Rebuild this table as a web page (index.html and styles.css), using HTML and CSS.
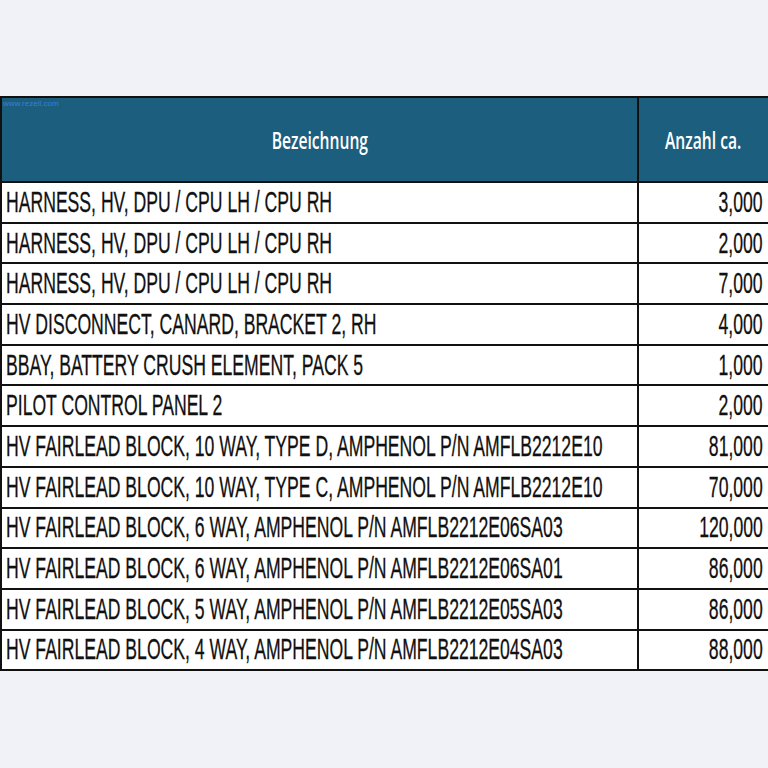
FILE: index.html
```html
<!DOCTYPE html>
<html lang="de">
<head>
<meta charset="utf-8">
<title>Bezeichnung</title>
<link rel="stylesheet" href="styles.css">
</head>
<body>
<div class="page">
  <table class="parts">
    <thead>
      <tr>
        <th class="col-name"><span class="mark">www.rezeil.com</span><span class="hd">Bezeichnung</span></th>
        <th class="col-qty"><span class="hd">Anzahl ca.</span></th>
      </tr>
    </thead>
    <tbody>
      <tr><td class="name"><span class="t">HARNESS, HV, DPU / CPU LH / CPU RH</span></td><td class="qty"><span class="t">3,000</span></td></tr>
      <tr><td class="name"><span class="t">HARNESS, HV, DPU / CPU LH / CPU RH</span></td><td class="qty"><span class="t">2,000</span></td></tr>
      <tr><td class="name"><span class="t">HARNESS, HV, DPU / CPU LH / CPU RH</span></td><td class="qty"><span class="t">7,000</span></td></tr>
      <tr><td class="name"><span class="t">HV DISCONNECT, CANARD, BRACKET 2, RH</span></td><td class="qty"><span class="t">4,000</span></td></tr>
      <tr><td class="name"><span class="t">BBAY, BATTERY CRUSH ELEMENT, PACK 5</span></td><td class="qty"><span class="t">1,000</span></td></tr>
      <tr><td class="name"><span class="t">PILOT CONTROL PANEL 2</span></td><td class="qty"><span class="t">2,000</span></td></tr>
      <tr><td class="name"><span class="t">HV FAIRLEAD BLOCK, 10 WAY, TYPE D, AMPHENOL P/N AMFLB2212E10</span></td><td class="qty"><span class="t">81,000</span></td></tr>
      <tr><td class="name"><span class="t">HV FAIRLEAD BLOCK, 10 WAY, TYPE C, AMPHENOL P/N AMFLB2212E10</span></td><td class="qty"><span class="t">70,000</span></td></tr>
      <tr><td class="name"><span class="t">HV FAIRLEAD BLOCK, 6 WAY, AMPHENOL P/N AMFLB2212E06SA03</span></td><td class="qty"><span class="t">120,000</span></td></tr>
      <tr><td class="name"><span class="t">HV FAIRLEAD BLOCK, 6 WAY, AMPHENOL P/N AMFLB2212E06SA01</span></td><td class="qty"><span class="t">86,000</span></td></tr>
      <tr><td class="name"><span class="t">HV FAIRLEAD BLOCK, 5 WAY, AMPHENOL P/N AMFLB2212E05SA03</span></td><td class="qty"><span class="t">86,000</span></td></tr>
      <tr><td class="name"><span class="t">HV FAIRLEAD BLOCK, 4 WAY, AMPHENOL P/N AMFLB2212E04SA03</span></td><td class="qty"><span class="t">88,000</span></td></tr>
    </tbody>
  </table>
</div>
</body>
</html>
```

FILE: styles.css
```css
html, body {
  margin: 0;
  padding: 0;
  background: #f0f2f8;
}
.page {
  padding-top: 96px;
  width: 770px;
  overflow: hidden;
}
.parts {
  border-collapse: collapse;
  width: 770px;
  table-layout: fixed;
}
.parts th, .parts td {
  border: 2px solid #111;
  padding: 0;
}
.col-name { width: 635px; }
.parts thead th {
  background: #1b5e7e;
  height: 83px;
  color: #fff;
  font-family: "Open Sans", "Liberation Sans", sans-serif;
  font-weight: 600;
  font-size: 23px;
  text-align: center;
  vertical-align: middle;
  position: relative;
}
.hd {
  display: inline-block;
  transform: scaleX(0.68);
}
.mark {
  position: absolute;
  left: 1px;
  top: 1px;
  font-family: "Liberation Sans", sans-serif;
  font-size: 8px;
  font-weight: 400;
  color: #3a7fd8;
}
.parts td {
  background: #fff;
  height: 38.7px;
  font-family: "Liberation Sans", sans-serif;
  font-size: 29px;
  color: #111;
  white-space: nowrap;
  line-height: 1;
  -webkit-text-stroke: 0.3px #111;
}
.name { padding-left: 4px !important; }
.qty { text-align: right; padding-right: 5px !important; }
.t {
  display: inline-block;
  transform: scaleX(0.607);
}
.name .t { transform-origin: left center; }
.qty .t { transform-origin: right center; }
```
